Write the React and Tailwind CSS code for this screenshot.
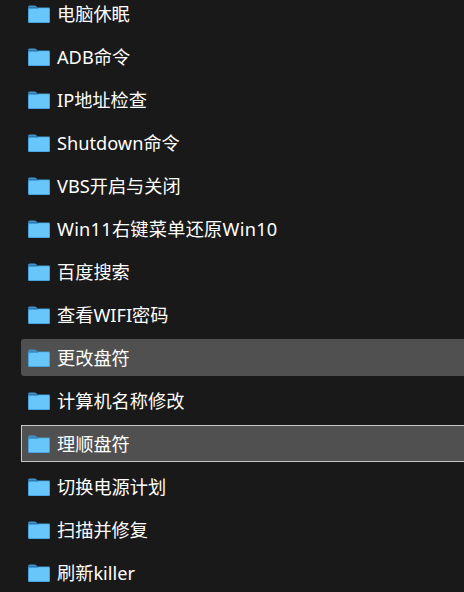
import React from 'react'

const items = [
    '电脑休眠',
    'ADB命令',
    'IP地址检查',
    'Shutdown命令',
    'VBS开启与关闭',
    'Win11右键菜单还原Win10',
    '百度搜索',
    '查看WIFI密码',
    '更改盘符',
    '计算机名称修改',
    '理顺盘符',
    '切换电源计划',
    '扫描并修复',
    '刷新killer',
]

const FolderIcon = () => (
    <svg width="24" height="20" viewBox="0 0 24 20" className="shrink-0">
        <path d="M1 3.500C1 2.400 1.600 1.500 2.700 1.500H7.500C8.200 1.500 8.800 1.800 9.300 2.300L10.500 3.500H1Z" fill="#3f93cf" />
        <rect x="1" y="3.500" width="22" height="15.500" rx="1" fill="#3f9ad8" />
        <path d="M1.800 6.500C1.800 5.700 2.300 5 3.100 5L10.500 5L11.800 4.200H21.200C21.800 4.200 22.200 4.700 22.200 5.300V17.300C22.200 17.900 21.800 18.300 21.200 18.300H2.800C2.200 18.300 1.800 17.900 1.800 17.300Z" fill="#69c6fb" />
    </svg>
)

const App = () => {
    return (
        <div className="h-[592px] w-[464px] overflow-hidden bg-[#191919] font-['Noto_Sans','Noto_Sans_CJK_SC',sans-serif] text-[18.2px] text-white">
            <ul className="-mt-[5px] -mr-[4px] flex flex-col gap-[6px] pl-[21px]">
                {items.map((name) => (
                    <li
                        key={name}
                        className={
                            name === '更改盘符'
                                ? 'flex h-[37px] items-center gap-[6px] rounded-l-[3px] bg-[#505050] pl-[6px]'
                                : name === '理顺盘符'
                                ? 'flex h-[37px] items-center gap-[6px] border border-[#c8c8c8] bg-[#505050] pl-[5px]'
                                : 'flex h-[37px] items-center gap-[6px] pl-[6px]'
                        }
                    >
                        <FolderIcon />
                        <span className={name.startsWith('Win11') ? 'translate-y-[1px] whitespace-nowrap tracking-[0.25px]' : 'translate-y-[1px] whitespace-nowrap'}>{name}</span>
                    </li>
                ))}
            </ul>
        </div>
    )
}

export default App
